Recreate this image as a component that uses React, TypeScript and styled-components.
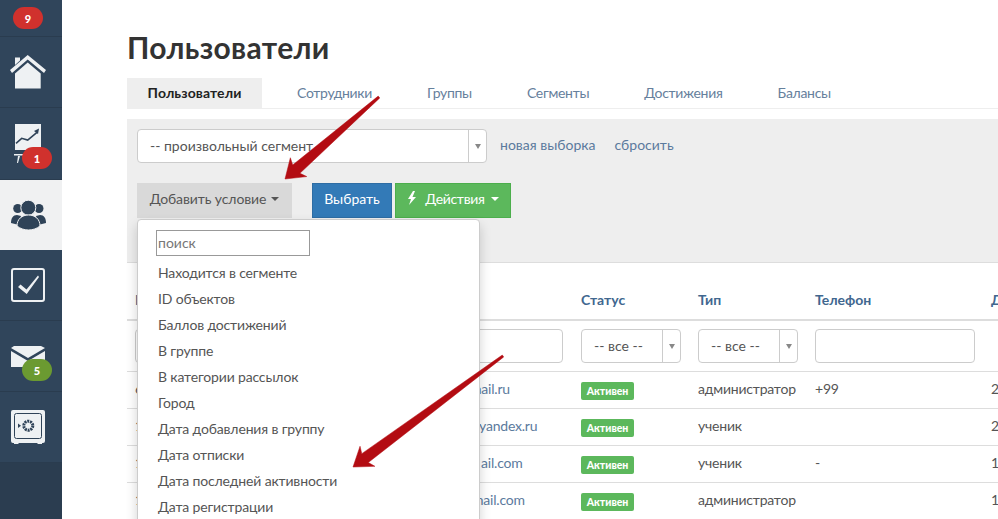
import * as React from 'react';
import styled, { createGlobalStyle, css } from 'styled-components';

const font = `Lato, "Open Sans", "Noto Sans", sans-serif`;

const GlobalStyle = createGlobalStyle`
	html, body {
		margin: 0;
		height: 100%;
		overflow: hidden;
		background: #fff;
	}
	* {
		box-sizing: border-box;
	}
`;

const tabs = ['Пользователи', 'Сотрудники', 'Группы', 'Сегменты', 'Достижения', 'Балансы'];

const menuItems = [
	'Находится в сегменте',
	'ID объектов',
	'Баллов достижений',
	'В группе',
	'В категории рассылок',
	'Город',
	'Дата добавления в группу',
	'Дата отписки',
	'Дата последней активности',
	'Дата регистрации',
];

const rows = [
	{ id: '6', mail: 'mail.ru', offset: 327, type: 'администратор', phone: '+99', date: '2' },
	{ id: '1', mail: 'yandex.ru', offset: 336, type: 'ученик', phone: '', date: '2' },
	{ id: '1', mail: 'ail.com', offset: 338, type: 'ученик', phone: '-', date: '19' },
	{ id: '1', mail: 'mail.com', offset: 329, type: 'администратор', phone: '', date: '19' },
];

const HomeIcon = () => (
	<svg width="36" height="34" viewBox="0 0 36 34">
		<path d="M5 2.500h5v3L5 10z" fill="#eef1f3" />
		<path d="M0 15 17.700 0 36 15l-2 3L17.700 4.500 2 18z" fill="#eef1f3" />
		<path d="M5 18.500 17.700 7.500l13 11v15H5z" fill="#eef1f3" />
	</svg>
);

const ChartIcon = () => (
	<svg width="28" height="40" viewBox="0 0 28 40">
		<path d="M1 0h26v26H1z" fill="#eef1f3" />
		<path d="M2 19.300l5.700-5 6 1.700L23 8.300" fill="none" stroke="#2f4358" strokeWidth="1.600" />
		<path d="M20 7l5-2.500-1 5.500z" fill="#2f4358" />
		<path d="M0 30h11v1.500H0zM4 32h2l-2 7H3z" fill="#eef1f3" />
	</svg>
);

const UsersIcon = () => (
	<svg width="35" height="30" viewBox="0 0 35 30">
		<circle cx="6.700" cy="8.500" r="4.500" fill="#2f4358" />
		<circle cx="28" cy="8.500" r="4.500" fill="#2f4358" />
		<path d="M0 23c0-5 2-8 6-8l4 1-2 9zM35 23c0-5-2-8-6-8l-4 1 2 9z" fill="#2f4358" />
		<circle cx="17.300" cy="7.700" r="7.500" fill="#2f4358" stroke="#f0f1f2" strokeWidth="1" />
		<path d="M6 26c0-7 5-11 11.500-11S29 19 29 26c-3 2.500-7 4-11.500 4S9 28.500 6 26z" fill="#2f4358" stroke="#f0f1f2" strokeWidth="1" />
	</svg>
);

const CheckIcon = () => (
	<svg width="34" height="34" viewBox="0 0 34 34">
		<rect x="1" y="1" width="32" height="32" rx="2" fill="none" stroke="#eef1f3" strokeWidth="2" />
		<path d="M7 19l2.500-2.500 6 5L27 7.500l1 1.500L15.700 26z" fill="#eef1f3" />
	</svg>
);

const MailIcon = () => (
	<svg width="34" height="21" viewBox="0 0 34 21">
		<path d="M0 2l3-2h27l4 2-17 10z" fill="#eef1f3" />
		<path d="M0 5l17 10L34 5v16H0z" fill="#eef1f3" />
	</svg>
);

const SafeIcon = () => (
	<svg width="34" height="34" viewBox="0 0 34 34">
		<path d="M2 0h30a2 2 0 0 1 2 2v29a2 2 0 0 1-2 2h-1v1h-4l-1-1H8l-1 1H3v-1H2a2 2 0 0 1-2-2V2a2 2 0 0 1 2-2z" fill="#eef1f3" />
		<rect x="3.500" y="3.500" width="27" height="25" rx="2" fill="none" stroke="#2f4358" strokeWidth="1" />
		<circle cx="17.300" cy="15.700" r="4.500" fill="none" stroke="#2f4358" strokeWidth="3" strokeDasharray="2 0.800" />
		<path d="M7 13.500l3 2.200-3 2.200z" fill="#2f4358" />
	</svg>
);

const BoltIcon = () => (
	<svg width="10" height="14" viewBox="0 0 10 14">
		<path d="M6 0 1 8h3l-2 6 7-8H5.500L8 0z" fill="#fff" />
	</svg>
);

// both red arrows: a shaft tapering to the tail, with a short wide head
const Arrow = ({ tail, tip }: { tail: [number, number]; tip: [number, number] }) => {
	const dx = tip[0] - tail[0];
	const dy = tip[1] - tail[1];
	const len = Math.hypot(dx, dy);
	const ux = dx / len;
	const uy = dy / len;
	const at = (back: number, side: number) =>
		`${tip[0] - ux * back - uy * side},${tip[1] - uy * back + ux * side}`;
	const points = [
		at(len, -1.200),
		at(15, -5.500),
		at(18, -12.500),
		`${tip[0]},${tip[1]}`,
		at(18, 12.500),
		at(15, 5.500),
		at(len, 1.200),
	].join(' ');
	return <polygon points={points} fill="#b30c12" stroke="#b30c12" strokeWidth="0.500" strokeLinejoin="round" />;
};

export default function App() {
	return (
		<Page>
			<GlobalStyle />
			<Sidebar>
				<NavItem $height={37}>
					<Badge $tone="red" $inline>9</Badge>
				</NavItem>
				<NavItem $height={71}>
					<HomeIcon />
				</NavItem>
				<NavItem $height={72}>
					<ChartIcon />
					<Badge $tone="red">1</Badge>
				</NavItem>
				<NavItem $height={70} $active>
					<UsersIcon />
				</NavItem>
				<NavItem $height={71}>
					<CheckIcon />
				</NavItem>
				<NavItem $height={71}>
					<MailIcon />
					<Badge $tone="green">5</Badge>
				</NavItem>
				<NavItem $height={71}>
					<SafeIcon />
				</NavItem>
			</Sidebar>

			<Main>
				<Title>Пользователи</Title>

				<TabBar>
					{tabs.map((tab, i) => (
						<Tab key={tab} $active={i === 0}>
							{tab}
						</Tab>
					))}
				</TabBar>

				<FilterPanel>
					<SegmentRow>
						<SelectBox $width={350}>
							<SelectText>-- произвольный сегмент</SelectText>
							<SelectCaret />
						</SelectBox>
						<PanelLinks>
							<PanelLink>новая выборка</PanelLink>
							<PanelLink>сбросить</PanelLink>
						</PanelLinks>
					</SegmentRow>
					<ButtonRow>
						<ConditionButton>
							Добавить условие <Caret />
						</ConditionButton>
						<PrimaryButton>Выбрать</PrimaryButton>
						<ActionButton>
							<BoltIcon />
							<ActionLabel>Действия</ActionLabel>
							<Caret />
						</ActionButton>
					</ButtonRow>
				</FilterPanel>

				<Table>
					<HeadRow>
						<HeadCell>И</HeadCell>
						<HeadCell />
						<HeadCell>Статус</HeadCell>
						<HeadCell>Тип</HeadCell>
						<HeadCell>Телефон</HeadCell>
						<HeadCell>Д</HeadCell>
					</HeadRow>
					<FilterRow>
						<FilterCell>
							<TextField $width={100} />
						</FilterCell>
						<FilterCell>
							<TextField $width={160} $end />
						</FilterCell>
						<FilterCell>
							<SelectBox $width={100}>
								<SelectText>-- все --</SelectText>
								<SelectCaret />
							</SelectBox>
						</FilterCell>
						<FilterCell>
							<SelectBox $width={100}>
								<SelectText>-- все --</SelectText>
								<SelectCaret />
							</SelectBox>
						</FilterCell>
						<FilterCell>
							<TextField $width={160} />
						</FilterCell>
						<FilterCell />
					</FilterRow>
					{rows.map((row, i) => (
						<BodyRow key={i}>
							<BodyCell>{row.id}</BodyCell>
							<BodyCell $link $offset={row.offset}>
								{row.mail}
							</BodyCell>
							<BodyCell>
								<StatusLabel>Активен</StatusLabel>
							</BodyCell>
							<BodyCell>{row.type}</BodyCell>
							<BodyCell>{row.phone}</BodyCell>
							<BodyCell>{row.date}</BodyCell>
						</BodyRow>
					))}
				</Table>

				<Dropdown>
					<SearchField>поиск</SearchField>
					{menuItems.map((item) => (
						<MenuItem key={item}>{item}</MenuItem>
					))}
				</Dropdown>
			</Main>

			<ArrowLayer viewBox="0 0 998 519" width="998" height="519">
				<Arrow tail={[379, 97]} tip={[285, 179]} />
				<Arrow tail={[503, 356]} tip={[353, 467]} />
			</ArrowLayer>
		</Page>
	);
}

const Page = styled.div`
	display: flex;
	width: 998px;
	height: 519px;
	overflow: hidden;
	position: relative;
	font-family: ${font};
	font-size: 14px;
	color: #4a4a4a;
`;

const Sidebar = styled.nav`
	flex: 0 0 62px;
	background: #2b3d50;
	display: flex;
	flex-direction: column;
`;

const NavItem = styled.div<{ $height: number; $active?: boolean }>`
	flex: 0 0 ${(p) => p.$height}px;
	position: relative;
	display: flex;
	align-items: center;
	justify-content: center;
	padding-right: 6px;
	background: ${(p) => (p.$active ? '#f0f1f2' : '#30455b')};
	border-bottom: 1px solid ${(p) => (p.$active ? '#f0f1f2' : '#2a3c4f')};
`;

const Badge = styled.span<{ $tone: 'red' | 'green'; $inline?: boolean }>`
	width: 30px;
	height: 22px;
	border-radius: 11px;
	display: flex;
	align-items: center;
	justify-content: center;
	font-size: 11px;
	font-weight: 900;
	color: #fff;
	background: ${(p) => (p.$tone === 'red' ? '#d0312d' : '#6b9a31')};
	position: ${(p) => (p.$inline ? 'static' : 'absolute')};
	left: 22px;
	bottom: 10px;
`;

const Main = styled.main`
	flex: 1;
	min-width: 0;
	position: relative;
	padding-left: 65px;
`;

const Title = styled.h1`
	margin: 0;
	padding-top: 30px;
	height: 78px;
	font-size: 30px;
	line-height: 34px;
	letter-spacing: 0.35px;
	font-weight: 700;
	color: #333;
`;

const TabBar = styled.div`
	display: flex;
	height: 31px;
	border-bottom: 1px solid #eee;
`;

const Tab = styled.div<{ $active?: boolean }>`
	height: 30px;
	padding: 0 ${(p) => (p.$active ? 0 : 27.5)}px 2px;
	flex: ${(p) => (p.$active ? '0 0 135px' : '0 0 auto')};
	margin-right: ${(p) => (p.$active ? 7.5 : 0)}px;
	display: flex;
	align-items: center;
	justify-content: center;
	font-size: 14px;
	font-weight: ${(p) => (p.$active ? 700 : 400)};
	letter-spacing: ${(p) => (p.$active ? '0.1px' : '-0.3px')};
	color: ${(p) => (p.$active ? '#222' : '#66809c')};
	background: ${(p) => (p.$active ? '#eee' : 'transparent')};
`;

const FilterPanel = styled.section`
	margin-top: 10px;
	height: 144px;
	padding: 10px;
	background: #eee;
	border-bottom: 1px solid #ddd;
`;

const SegmentRow = styled.div`
	display: flex;
	align-items: center;
	gap: 13px;
	height: 34px;
`;

const SelectBox = styled.div<{ $width: number }>`
	width: ${(p) => p.$width}px;
	height: 34px;
	display: flex;
	background: #fff;
	border: 1px solid #ccc;
	border-radius: 4px;
`;

const SelectText = styled.span`
	flex: 1;
	display: flex;
	align-items: center;
	padding: 0 0 2px 12px;
	font-size: 14px;
	color: #555;
`;

const SelectCaret = styled.span`
	flex: 0 0 18px;
	border-left: 1px solid #ccc;
	display: flex;
	align-items: center;
	justify-content: center;

	&::after {
		content: '';
		border-top: 5px solid #888;
		border-left: 3px solid transparent;
		border-right: 3px solid transparent;
	}
`;

const PanelLinks = styled.div`
	display: flex;
	gap: 19px;
	padding-bottom: 3px;
`;

const PanelLink = styled.a`
	font-size: 14px;
	color: #5b7a9d;
`;

const ButtonRow = styled.div`
	display: flex;
	margin-top: 20px;
	height: 35px;
`;

const Caret = styled.i`
	display: inline-block;
	margin: 2px 0 0 1px;
	border-top: 4px solid currentColor;
	border-left: 4px solid transparent;
	border-right: 4px solid transparent;
`;

const ConditionButton = styled.div`
	width: 155px;
	margin-right: 20px;
	padding-bottom: 5px;
	display: flex;
	align-items: center;
	justify-content: center;
	gap: 4px;
	font-size: 14px;
	letter-spacing: -0.1px;
	color: #555;
	background: #d9d9d9;
`;

const PrimaryButton = styled.div`
	width: 80px;
	margin-right: 3px;
	padding-bottom: 5px;
	display: flex;
	align-items: center;
	justify-content: center;
	font-size: 14px;
	color: #fff;
	background: #337ab7;
	border: 1px solid #2e6da4;
`;

const ActionButton = styled(PrimaryButton)`
	width: 116px;
	margin-right: 0;
	gap: 5px;
	background: #5cb85c;
	border-color: #4cae4c;
`;

const ActionLabel = styled.span`
	margin-left: 3px;
	letter-spacing: -0.3px;
`;

const Table = styled.div`
	display: flex;
	flex-direction: column;
`;

const tableRow = css`
	display: grid;
	grid-template-columns: 8px 438px 117px 117px 176px 1fr;
	padding-left: 8px;
`;

const HeadRow = styled.div`
	${tableRow}
	height: 58px;
	border-bottom: 2px solid #ddd;
	align-items: end;
	padding-bottom: 11px;
`;

const HeadCell = styled.div`
	font-size: 14px;
	font-weight: 700;
	color: #41678f;
	white-space: nowrap;
`;

const FilterRow = styled.div`
	${tableRow}
	height: 51px;
	border-bottom: 1px solid #ddd;
	align-items: center;
`;

const FilterCell = styled.div`
	min-width: 0;
`;

const TextField = styled.div<{ $width: number; $end?: boolean }>`
	height: 34px;
	width: ${(p) => p.$width}px;
	margin-left: ${(p) => (p.$end ? 'auto' : '0')};
	margin-right: ${(p) => (p.$end ? '18px' : '0')};
	background: #fff;
	border: 1px solid #ccc;
	border-radius: 4px;
`;

const BodyRow = styled.div`
	${tableRow}
	height: 37px;
	border-bottom: 1px solid #ddd;
	align-items: center;
`;

const BodyCell = styled.div<{ $link?: boolean; $offset?: number }>`
	font-size: 14px;
	letter-spacing: -0.2px;
	white-space: nowrap;
	padding-bottom: 4px;
	color: ${(p) => (p.$link ? '#5b7a9d' : '#555')};
	padding-left: ${(p) => p.$offset ?? 0}px;
`;

const StatusLabel = styled.span`
	display: block;
	width: 53px;
	height: 18px;
	margin-top: 6px;
	line-height: 18px;
	border-radius: 2px;
	text-align: center;
	font-size: 10.5px;
	font-weight: 900;
	letter-spacing: 0;
	color: #fff;
	background: #5cb85c;
`;

const Dropdown = styled.div`
	position: absolute;
	left: 75px;
	top: 219px;
	width: 343px;
	height: 320px;
	padding: 10px 0 0 20px;
	background: #fff;
	border: 1px solid #ccc;
	border-radius: 4px;
	box-shadow: 0 6px 12px rgba(0, 0, 0, 0.18);
`;

const SearchField = styled.div`
	width: 154px;
	height: 26px;
	padding: 0 0 2px 1px;
	margin-left: -2px;
	margin-bottom: 4px;
	display: flex;
	align-items: center;
	font-size: 14px;
	color: #777;
	border: 1px solid #999;
`;

const MenuItem = styled.div`
	height: 26px;
	padding-bottom: 2px;
	display: flex;
	align-items: center;
	font-size: 14px;
	letter-spacing: -0.15px;
	color: #555;
	white-space: nowrap;
`;

const ArrowLayer = styled.svg`
	position: absolute;
	left: 0;
	top: 0;
	pointer-events: none;
`;
